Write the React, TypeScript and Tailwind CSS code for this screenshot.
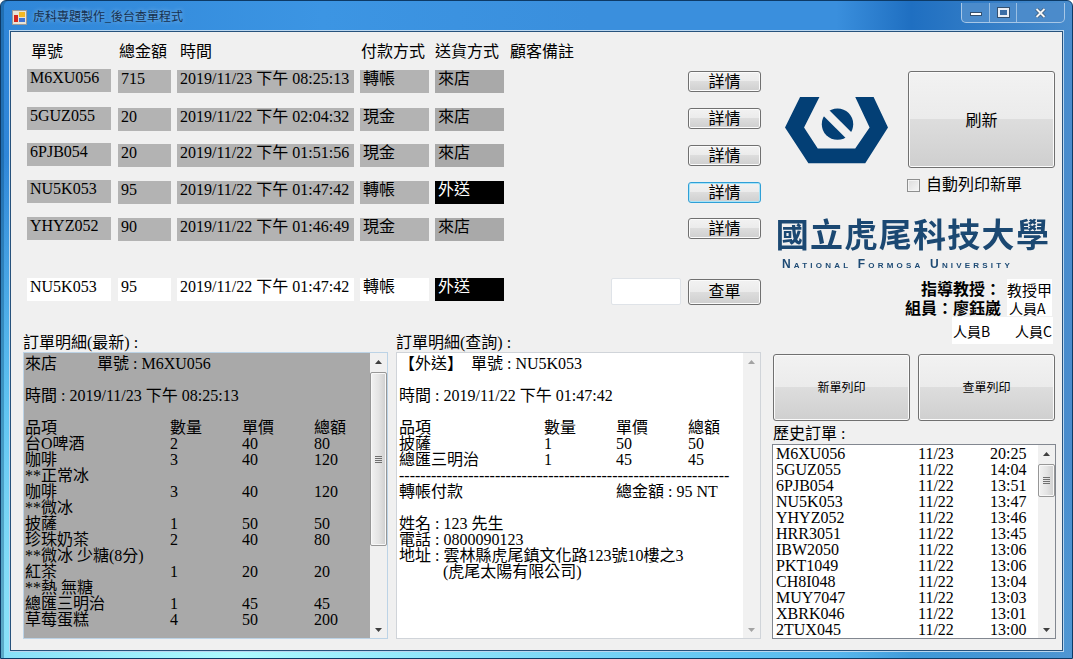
const serif = "font-['Liberation_Serif','Noto_Sans_CJK_TC',serif]";

const orders = [
  { id: "M6XU056", amt: "715", time: "2019/11/23 下午 08:25:13", pay: "轉帳", ship: "來店", rowCls: "mt-0", btn: "mt-px" },
  { id: "5GUZ055", amt: "20", time: "2019/11/22 下午 02:04:32", pay: "現金", ship: "來店", rowCls: "mt-[15px]", btn: "mt-0" },
  { id: "6PJB054", amt: "20", time: "2019/11/22 下午 01:51:56", pay: "現金", ship: "來店", rowCls: "mt-[13px]", btn: "mt-px" },
  { id: "NU5K053", amt: "95", time: "2019/11/22 下午 01:47:42", pay: "轉帳", ship: "外送", rowCls: "mt-[14px]", btn: "mt-px", focus: true },
  { id: "YHYZ052", amt: "90", time: "2019/11/22 下午 01:46:49", pay: "現金", ship: "來店", rowCls: "mt-[14px]", btn: "mt-0" },
];

const history = [
  ["M6XU056", "11/23", "20:25"],
  ["5GUZ055", "11/22", "14:04"],
  ["6PJB054", "11/22", "13:51"],
  ["NU5K053", "11/22", "13:47"],
  ["YHYZ052", "11/22", "13:46"],
  ["HRR3051", "11/22", "13:45"],
  ["IBW2050", "11/22", "13:06"],
  ["PKT1049", "11/22", "13:06"],
  ["CH8I048", "11/22", "13:04"],
  ["MUY7047", "11/22", "13:03"],
  ["XBRK046", "11/22", "13:01"],
  ["2TUX045", "11/22", "13:00"],
];

const items: [string, string?, string?, string?][] = [
  ["台O啤酒", "2", "40", "80"],
  ["咖啡", "3", "40", "120"],
  ["**正常冰"],
  ["咖啡", "3", "40", "120"],
  ["**微冰"],
  ["披薩", "1", "50", "50"],
  ["珍珠奶茶", "2", "40", "80"],
  ["**微冰 少糖(8分)"],
  ["紅茶", "1", "20", "20"],
  ["**熱 無糖"],
  ["總匯三明治", "1", "45", "45"],
  ["草莓蛋糕", "4", "50", "200"],
];

function Win7Button({ label, cls = "text-[16px]", focus = false }: { label: string; cls?: string; focus?: boolean }) {
  return (
    <button
      className={`relative flex items-center justify-center rounded-[3px] border leading-none text-black ${
        focus ? "border-[#2f9fd6] shadow-[inset_0_0_0_1px_#a9e4f8]" : "border-[#707070] shadow-[inset_0_0_0_1px_#fbfbfb]"
      } bg-[linear-gradient(to_bottom,#f2f2f2_0%,#ebebeb_49%,#dddddd_50%,#cfcfcf_100%)] ${cls}`}
    >
      {label}
    </button>
  );
}

function Cell({ text, tone = "gray", cls = "" }: { text: string; tone?: "gray" | "dark" | "white" | "black"; cls?: string }) {
  const toneCls = {
    gray: "bg-[#b3b3b3] text-black",
    dark: "bg-[#a9a9a9] text-black",
    white: "bg-white text-black",
    black: "bg-black text-white",
  }[tone];
  return <div className={`h-[23px] pl-[3px] text-[16px] leading-[18px] whitespace-nowrap ${toneCls} ${cls}`}>{text}</div>;
}

const rowGrid = "grid grid-cols-[85px_53px_177px_69px_69px_1fr_73px] gap-x-[6px] items-start";

function Arrow({ up, color }: { up?: boolean; color: string }) {
  return (
    <div className="flex h-[17px] items-center justify-center">
      <svg width="7" height="4" viewBox="0 0 7 4">
        <path d={up ? "M0 4 L3.5 0 L7 4 Z" : "M0 0 L3.5 4 L7 0 Z"} fill={color} />
      </svg>
    </div>
  );
}

function Scrollbar({ thumb, disabled, track = "bg-[#f0f0f0]" }: { thumb?: string; disabled?: boolean; track?: string }) {
  return (
    <div className={`flex w-[17px] shrink-0 flex-col ${track}`}>
      <Arrow up color={disabled ? "#a3a3a3" : "#3f3f3f"} />
      <div className="min-h-0 flex-1">
        {thumb && (
          <div
            className={`flex items-center justify-center rounded-[2px] border border-[#979797] bg-[linear-gradient(to_right,#f2f2f2,#e4e4e4_50%,#cfcfcf)] shadow-[inset_0_0_0_1px_#f8f8f8] ${thumb}`}
          >
            <div className="flex w-[7px] flex-col gap-px">
              <div className="h-px bg-[#6f6f6f]" />
              <div className="h-px bg-[#6f6f6f]" />
              <div className="h-px bg-[#6f6f6f]" />
              <div className="h-px bg-[#6f6f6f]" />
            </div>
          </div>
        )}
      </div>
      <Arrow color={disabled ? "#a3a3a3" : "#3f3f3f"} />
    </div>
  );
}

const detailGrid = "grid grid-cols-[145px_72px_72px_1fr]";

function ItemRow({ a, b, c, d }: { a: string; b?: string; c?: string; d?: string }) {
  return (
    <div className={`${detailGrid} h-[16px] whitespace-nowrap`}>
      <span>{a}</span>
      <span>{b}</span>
      <span>{c}</span>
      <span>{d}</span>
    </div>
  );
}

function Blank() {
  return <div className="h-[16px]" />;
}

function LatestOrder() {
  return (
    <div className="flex h-[287px] w-[365px] border border-[#bcd3e6] bg-[#a9a9a9]">
      <div className="flex-1 pl-px pt-[3px] text-[16px] leading-[16px] text-black">
        <div className="h-[16px] whitespace-pre">來店          單號 : M6XU056</div>
        <Blank />
        <div className="h-[16px] whitespace-pre">時間 : 2019/11/23 下午 08:25:13</div>
        <Blank />
        <ItemRow a="品項" b="數量" c="單價" d="總額" />
        {items.map((r, i) => (
          <ItemRow key={i} a={r[0]} b={r[1]} c={r[2]} d={r[3]} />
        ))}
      </div>
      <Scrollbar thumb="mt-[2px] h-[174px]" />
    </div>
  );
}

function QueryOrder() {
  return (
    <div className="flex h-[287px] w-[365px] border border-[#d0d4d9] bg-white">
      <div className="flex-1 pl-[2px] pt-[3px] text-[16px] leading-[16px] text-black">
        <div className="h-[16px] whitespace-pre">【外送】  單號 : NU5K053</div>
        <Blank />
        <div className="h-[16px] whitespace-pre">時間 : 2019/11/22 下午 01:47:42</div>
        <Blank />
        <ItemRow a="品項" b="數量" c="單價" d="總額" />
        <ItemRow a="披薩" b="1" c="50" d="50" />
        <ItemRow a="總匯三明治" b="1" c="45" d="45" />
        <div className="h-[16px] overflow-hidden whitespace-pre">--------------------------------------------------------------</div>
        <div className="grid h-[16px] grid-cols-[217px_1fr] whitespace-pre">
          <span>轉帳付款</span>
          <span>總金額 : 95 NT</span>
        </div>
        <Blank />
        <div className="h-[16px] whitespace-pre">姓名 : 123 先生</div>
        <div className="h-[16px] whitespace-pre">電話 : 0800090123</div>
        <div className="h-[16px] whitespace-pre">地址 : 雲林縣虎尾鎮文化路123號10樓之3</div>
        <div className="h-[16px] whitespace-pre pl-[44px]">(虎尾太陽有限公司)</div>
      </div>
      <Scrollbar disabled track="bg-[#f1f1f1]" />
    </div>
  );
}

function HexLogo() {
  return (
    <svg width="103" height="67" viewBox="75 292 308 200" className="block">
      <path
        d="M75 383 L120 292 L178 292 L132 383 L173 446 L285 446 L328 383 L285 292 L340 292 L383 383 L315 490 L145 490 Z"
        fill="#033f75"
      />
      <circle cx="232" cy="373" r="47" fill="#033f75" />
      <path d="M198.5 322.5 L282.5 406.5 L265.5 423.5 L181.5 339.5 Z" fill="#f0f0f0" />
    </svg>
  );
}

function AppIcon() {
  return (
    <svg width="15" height="15" viewBox="0 0 15 15" className="shrink-0">
      <rect x="0.5" y="0.5" width="14" height="14" fill="#e9e4d6" stroke="#9a9a9a" />
      <rect x="2" y="5" width="4" height="7" fill="#d4261c" />
      <rect x="7" y="2" width="6" height="5" fill="#f2b824" />
      <rect x="7" y="8" width="6" height="4" fill="#3f74d6" />
    </svg>
  );
}

function WindowControls() {
  return (
    <div className="flex h-[20px] w-[104px] overflow-hidden rounded-b-[5px] border border-t-0 border-[#cfe2f3]/70 bg-[#4b8bcb]">
      <div className="flex w-[28px] items-center justify-center border-r border-[#cfe2f3]/60 pt-[3px]">
        <div className="h-[4px] w-[12px] border border-[#33506f] bg-white" />
      </div>
      <div className="flex w-[27px] items-center justify-center border-r border-[#cfe2f3]/60">
        <div className="h-[9px] w-[11px] border-2 border-[#e8eef5] bg-[#3b6ea6] outline outline-1 outline-[#33506f]" />
      </div>
      <div className="flex flex-1 items-center justify-center">
        <svg width="11" height="10" viewBox="0 0 11 10">
          <path d="M1.5 1 L9.5 9 M9.5 1 L1.5 9" stroke="#33506f" strokeWidth="3.4" />
          <path d="M1.5 1 L9.5 9 M9.5 1 L1.5 9" stroke="#f4f6f8" strokeWidth="2" />
        </svg>
      </div>
    </div>
  );
}

export default function App() {
  return (
    <div
      className={`flex h-[659px] w-[1073px] flex-col overflow-hidden rounded-t-[6px] border border-[#0d3a66] shadow-[inset_3px_0_0_rgba(10,70,110,0.35)] bg-[radial-gradient(900px_520px_at_22%_100%,rgba(175,252,255,0.98),rgba(110,215,250,0.75)_55%,rgba(90,190,245,0)_100%),linear-gradient(90deg,#2f86d8_0%,#3c95e3_30%,#3a8fdd_55%,#3a8fdd_78%,#1f6fc1_85%,#4a8dcd_100%)] ${serif}`}
    >
      <div className="flex h-[30px] shrink-0 items-start justify-between">
        <div className="ml-[11px] mt-[9px] flex items-center gap-[6px]">
          <AppIcon />
          <span className="text-[12px] leading-[15px] text-[#16304f] [text-shadow:0_0_5px_rgba(255,255,255,0.45)]">虎科專題製作_後台查單程式</span>
        </div>
        <div className="mr-[7px] mt-[2px]">
          <WindowControls />
        </div>
      </div>

      <div className="mx-[9px] mb-[7px] flex min-h-0 flex-1 flex-col border border-[#27527c] bg-[#f0f0f0] shadow-[0_0_0_1px_#b9d6ef]">
        <div className="flex flex-1 pl-[12px] pr-[8px]">
          {/* left column */}
          <div className="w-[738px] shrink-0">
            <div className="pl-[4px] pt-[10px] text-[16px]">
              <div className={`${rowGrid} h-[28px] leading-[20px]`}>
                <span className="pl-[4px]">單號</span>
                <span className="pl-px">總金額</span>
                <span className="pl-[3px]">時間</span>
                <span className="pl-px">付款方式</span>
                <span className="whitespace-nowrap">送貨方式</span>
                <span className="whitespace-nowrap">顧客備註</span>
              </div>
              {orders.map((o) => (
                <div key={o.id} className={`${rowGrid} ${o.rowCls}`}>
                  <Cell text={o.id} cls="-mt-px w-[84px]" />
                  <Cell text={o.amt} />
                  <Cell text={o.time} />
                  <Cell text={o.pay} />
                  <Cell text={o.ship} tone={o.ship === "外送" ? "black" : "dark"} />
                  <div />
                  <Win7Button label="詳情" focus={o.focus} cls={`h-[21px] w-[73px] text-[16px] ${o.btn}`} />
                </div>
              ))}
              <div className={`${rowGrid} mt-[37px]`}>
                <Cell text="NU5K053" tone="white" cls="w-[84px]" />
                <Cell text="95" tone="white" />
                <Cell text="2019/11/22 下午 01:47:42" tone="white" />
                <Cell text="轉帳" tone="white" />
                <Cell text="外送" tone="black" />
                <div className="flex justify-end">
                  <div className="mr-[1px] h-[27px] w-[70px] rounded-[2px] border border-[#dfe3e8] bg-white" />
                </div>
                <Win7Button label="查單" cls="mt-px h-[26px] w-[73px] text-[16px]" />
              </div>
            </div>
            <div className="mt-[28px] flex gap-[8px]">
              <div>
                <div className="h-[19px] text-[16px] leading-[19px]">訂單明細(最新) :</div>
                <LatestOrder />
              </div>
              <div>
                <div className="h-[19px] text-[16px] leading-[19px]">訂單明細(查詢) :</div>
                <QueryOrder />
              </div>
            </div>
          </div>

          {/* right column */}
          <div className="ml-[12px] flex-1">
            <div className="flex pt-[39px]">
              <div className="w-[135px] pl-[12px] pt-[26px]">
                <HexLogo />
              </div>
              <div className="w-[147px]">
                <Win7Button label="刷新" cls="h-[97px] w-[147px] pt-[3px] text-[16px]" />
                <label className="ml-[-1px] mt-[9px] flex items-center gap-[6px] text-[16px] leading-[16px]">
                  <span className="h-[13px] w-[13px] border border-[#8e8f8f] bg-[linear-gradient(135deg,#dcdcdc,#f6f6f6)] shadow-[inset_0_0_0_1px_#f4f4f4]" />
                  自動列印新單
                </label>
              </div>
            </div>

            <div className="mt-[21px]">
              <div className="w-[280px] blur-[0.4px] text-center text-[33px] leading-[38px] font-bold whitespace-nowrap tracking-[1.3px] text-[#1b4872] font-['Noto_Sans_CJK_TC',serif]">
                國立虎尾科技大學
              </div>
              <div className="mt-[7px] h-[10px] pl-[9px] blur-[0.3px] [font-variant:small-caps] font-['Liberation_Sans',sans-serif] text-[12px] leading-[10px] font-bold whitespace-nowrap tracking-[3.2px] text-[#1d4a74]">
                National Formosa University
              </div>
            </div>

            <div className="mt-[10px] flex flex-col items-end text-[16px] leading-[16px]">
              <div className="flex w-full justify-end">
                <span className="mt-[3px] mr-[6px] font-bold whitespace-nowrap">指導教授：</span>
                <span className="mr-[4px] h-[22px] w-[45px] bg-white pt-[3px] font-['Noto_Sans_CJK_TC',sans-serif] text-[15px] whitespace-nowrap">教授甲</span>
              </div>
              <div className="flex w-full justify-end">
                <span className="mr-[6px] font-bold whitespace-nowrap">組員：廖鈺崴</span>
                <span className="mr-[4px] h-[15px] w-[45px] bg-white pl-[2px] font-['Noto_Sans_CJK_TC',sans-serif] text-[14px] leading-[15px] whitespace-nowrap">人員A</span>
              </div>
              <div className="mr-[3px] flex h-[27px] w-[101px] items-center justify-between bg-white px-[1px] font-['Noto_Sans_CJK_TC',sans-serif] text-[14px]">
                <span>人員B</span>
                <span>人員C</span>
              </div>
            </div>

            <div className="mt-[10px] flex gap-[8px]">
              <Win7Button label="新單列印" cls="h-[67px] w-[137px] text-[12px]" />
              <Win7Button label="查單列印" cls="h-[67px] w-[137px] text-[12px]" />
            </div>

            <div className="mt-px h-[22px] pt-[2px] text-[16px] leading-[19px]">歷史訂單 :</div>
            <div className="-ml-px flex h-[195px] w-[284px] overflow-hidden border border-[#828790] bg-white">
              <div className="flex-1 pl-[3px] pt-[1px] text-[16px] leading-[16px]">
                {history.map((h) => (
                  <div key={h[0]} className="grid h-[16px] grid-cols-[142px_72px_1fr] whitespace-nowrap">
                    <span>{h[0]}</span>
                    <span>{h[1]}</span>
                    <span>{h[2]}</span>
                  </div>
                ))}
              </div>
              <Scrollbar thumb="mt-[2px] h-[33px]" />
            </div>
          </div>
        </div>
      </div>
    </div>
  );
}
